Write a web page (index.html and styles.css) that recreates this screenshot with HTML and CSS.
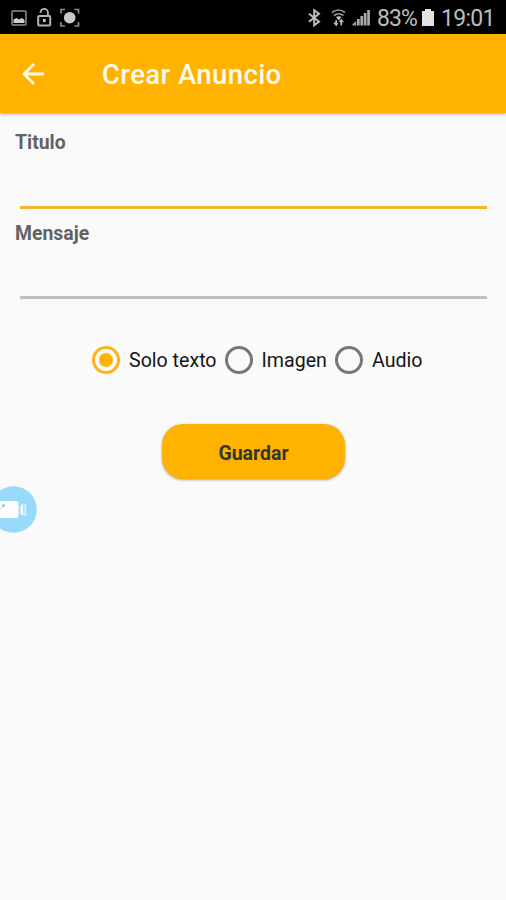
FILE: index.html
```html
<!DOCTYPE html>
<html lang="es">
<head>
<meta charset="utf-8">
<title>Crear Anuncio</title>
<link rel="stylesheet" href="styles.css">
</head>
<body>
<div class="screen">
  <div class="status">
    <svg class="status-left" width="90" height="34" viewBox="0 0 90 34" fill="none">
      <rect x="12" y="11" width="14" height="14" rx="1" stroke="#8e8e8e" stroke-width="1.5"/>
      <path d="M13.500 23v-3.500l3-1.500 2.500 1.500 3-1.500 2.500 2v3z" fill="#d0d0d0"/>
      <rect x="38.200" y="16" width="12" height="9.500" rx="1" stroke="#b4b4b4" stroke-width="2"/>
      <path d="M40.500 13v-.500a3.700 3.700 0 0 1 7.400 0v3.500" stroke="#b4b4b4" stroke-width="1.800"/>
      <rect x="43" y="19" width="2.600" height="3" fill="#d0d0d0"/>
      <circle cx="69.700" cy="17.700" r="5.800" fill="#c8c8c8"/>
      <path d="M61 13.500V9.500h4M74.500 9.500h4v4M78.500 22v4h-4M65 26h-4v-4" stroke="#8c8c8c" stroke-width="1.700"/>
    </svg>
    <div class="status-right">
      <svg width="66" height="34" viewBox="306 0 66 34" fill="none">
        <path d="M309 13.800l10 8-4.800 3.400V10.300l4.800 3.500-10 8" stroke="#bdbdbd" stroke-width="2"/>
        <path d="M332 12.500q6.500-5 13 0M334 15.500q4.500-3.500 9.500 0" stroke="#9a9a9a" stroke-width="1.700"/>
        <path d="M336 17q2.700-1.500 5.400 0l-2.700 3.500z" fill="#c4c4c4"/>
        <path d="M336.200 20v5.500M341.200 20v5.500M334.200 22.500l2 2.500 1.500-2M339.500 22l1.700-2 2 2" stroke="#b4b4b4" stroke-width="1.700"/>
        <path d="M352.500 25.500v-1.500l3.700-3v4.500z" fill="#999"/>
        <path d="M357 25.500v-6.500h2.700v6.500zM360.400 25.500v-9.500h2.700v9.500zM363.800 25.500v-12.500h2.700v12.500zM367.200 25.500v-15.500h2.700v15.500z" fill="#aaa"/>
      </svg>
      <span class="battery-level">83%</span>
      <svg class="battery" width="12" height="17" viewBox="0 0 12 17"><path d="M3 0h6v2h3v15H0V2h3z" fill="#e3e3e3"/></svg>
      <span class="clock">19:01</span>
    </div>
  </div>
  <header class="appbar">
    <svg class="back" width="24" height="24" viewBox="0 0 24 24" fill="none" stroke="#fff9ea" stroke-width="2.800"><path d="M23 12H3M13 2L3 12 13 22"/></svg>
    <h1><span>Crear Anuncio</span></h1>
  </header>
  <main>
    <div class="field active"><label><span>Titulo</span></label><div class="line"></div></div>
    <div class="field"><label><span>Mensaje</span></label><div class="line"></div></div>
    <div class="options">
      <div class="option first"><i class="radio on"></i><span>Solo texto</span></div>
      <div class="option second"><i class="radio"></i><span>Imagen</span></div>
      <div class="option"><i class="radio"></i><span>Audio</span></div>
    </div>
    <button class="save"><span>Guardar</span></button>
  </main>
  <div class="recorder">
    <svg width="38" height="50" viewBox="0 0 38 50">
      <circle cx="13.500" cy="24.500" r="23.300" fill="#97dafa"/>
      <path d="M0 16h16.500q2 0 2 2v13q0 2-2 2H0z" fill="#fff"/>
      <path d="M20.300 20.500l3-2v12.500l-3-2z" fill="#f0faff"/>
      <path d="M25.300 19v12" stroke="#d4f0fd" stroke-width="2"/>
      <circle cx="3.500" cy="20.500" r="1.500" fill="#7bcdf6"/>
      <path d="M0 25l3-3" stroke="#b5e5fc" stroke-width="1"/>
    </svg>
  </div>
</div>
</body>
</html>
```
FILE: styles.css
```css
* { box-sizing: border-box; }
body { margin: 0; background: #fafafa; font-family: Roboto, sans-serif; }
.screen { position: relative; width: 506px; height: 900px; overflow: hidden; background: #fafafa; }
.status { height: 34px; background: #000; display: flex; justify-content: space-between; color: #bdbdbd; }
.status svg { display: block; flex: none; }
.status-right { display: flex; align-items: center; width: 200px; flex: none; }
.battery-level, .clock { font-size: 23px; line-height: 34px; padding-top: 3px; white-space: nowrap; }
.battery-level { width: 45px; margin-left: 5px; letter-spacing: -0.9px; }
.clock { margin-left: 7px; letter-spacing: -0.700px; }
.appbar { position: relative; height: 79px; background: #ffb300; display: flex; align-items: center; padding-left: 21px; box-shadow: 0 1px 4px rgba(0,0,0,.35); }
.back { flex: none; }
h1 { margin: 2px 0 0 57px; font-size: 27.500px; letter-spacing: .4px; font-weight: 500; color: #fffaf0; line-height: 32px; }
main { padding: 18px 19px 0 15px; display: flex; flex-direction: column; }
.field { height: 91px; }
.field label { display: block; font-size: 19.400px; line-height: 24px; font-weight: 700; color: #636363; }
.line { height: 3px; background: #bfbfbf; margin: 50px 0 0 5px; }
.active .line { background: #f9b233; margin-top: 51px; }
.options { display: flex; align-items: center; margin: 32px 0 0 77px; height: 29px; color: #161616; font-size: 19.600px; }
.option { display: flex; align-items: center; gap: 9px; white-space: nowrap; }
.option span { padding-top: 2px; }
.first { width: 132.500px; }
.second { width: 110.500px; }
.radio { width: 28px; height: 28px; border: 3px solid #777; border-radius: 50%; flex: none; display: grid; place-items: center; }
.on { border-color: #ffb31a; }
.on::after { content: ""; width: 14px; height: 14px; border-radius: 50%; background: #ffb300; }
.save { width: 183px; height: 55px; margin: 50px 0 0 147px; border: 0; border-radius: 21px; background: #ffb300; font: 700 19.500px Roboto, sans-serif; color: #33362c; box-shadow: 0 1px 3px rgba(0,0,0,.35); padding: 3px 0 0; }
.recorder { position: absolute; left: 0; top: 485px; }
.recorder svg { display: block; }
```
